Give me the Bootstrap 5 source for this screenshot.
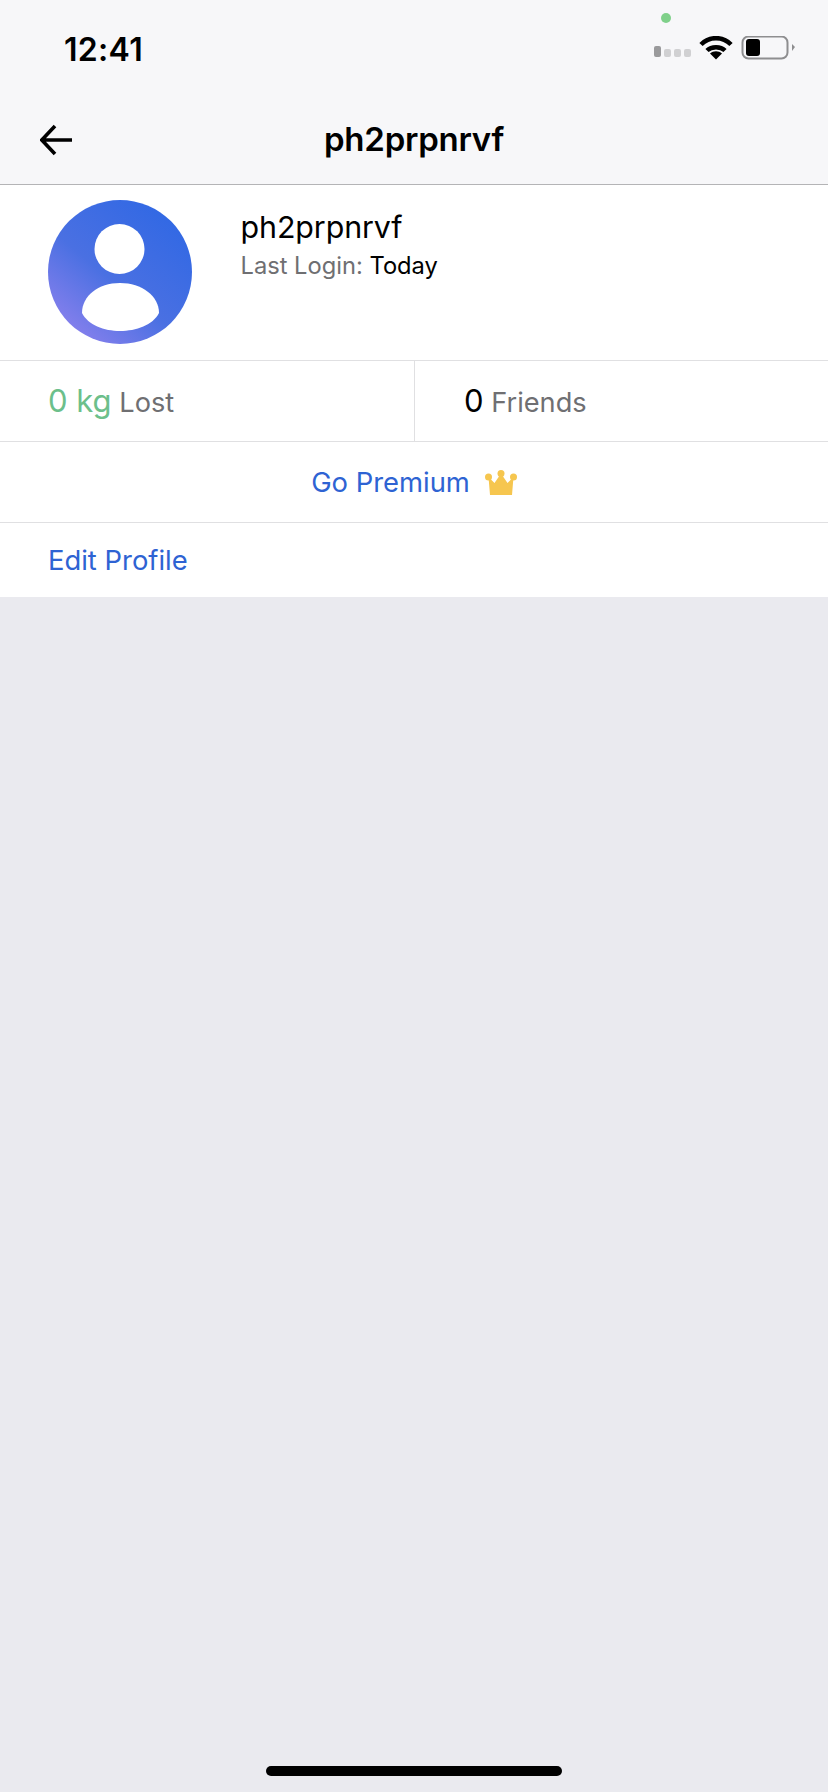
<!DOCTYPE html>
<html lang="en">
<head>
    <meta charset="UTF-8">
    <meta name="viewport" content="width=device-width, initial-scale=1.0">
    <title>Profile</title>
    <link href="https://cdn.jsdelivr.net/npm/bootstrap@5.3.3/dist/css/bootstrap.min.css" rel="stylesheet">
    <style>
        body {
            background: #eaeaef;
            font-family: Inter, "Liberation Sans", sans-serif;
            color: #000;
        }
        .screen { height: 1792px; }
        .top-area { background: #f7f7f9; border-bottom: 1px solid #b4b4b6; height: 185px; }
        .status-row { height: 88px; padding: 12px 33px 0 64px; position: relative; }
        .clock { font-size: 32px; font-weight: 600; letter-spacing: .3px; line-height: 76px; }
        .green-dot { position: absolute; left: 661px; top: 13px; width: 10px; height: 10px; border-radius: 50%; background: #7fd08a; }
        .nav-row { height: 96px; padding: 8px 0 0 40px; position: relative; }
        .back-btn { width: 32px; height: 32px; padding: 0; border: 0; background: none; line-height: 0; }
        .page-title { position: absolute; left: 0; right: 0; top: 32px; text-align: center; font-size: 33px; font-weight: 600; margin: 0; line-height: 38px; letter-spacing: -.25px; }
        .panel { background: #fff; }
        .profile-row { height: 176px; padding: 15px 0 0 48px; border-bottom: 1px solid #e0e0e2; }
        .avatar-pic { width: 144px; height: 144px; flex: none; }
        .profile-text { padding: 8px 0 0 48.500px; }
        .profile-name { font-size: 30.400px; line-height: 38px; letter-spacing: -.1px; }
        .login-line { font-size: 23.700px; line-height: 40px; }
        .muted-grey { color: #6f6f72; }
        .stat-row { height: 81px; border-bottom: 1px solid #e0e0e2; font-size: 27.200px; }
        .stat-cell { width: 50%; padding-left: 48px; line-height: 80px; }
        .stat-cell + .stat-cell { padding-left: 49px; border-left: 1px solid #e0e0e2; }
        .kg-green { color: #6cbf8b; font-size: 31px; }
        .stat-num { font-size: 31px; }
        .premium-row { height: 81px; padding-top: 2px; border-bottom: 1px solid #e0e0e2; font-size: 27.400px; color: #2e63d3; gap: 15px; }
        .edit-row { height: 74px; padding: 2px 0 0 48px; font-size: 27.400px; color: #2e63d3; }
        .home-bar { width: 296px; height: 10px; border-radius: 5px; background: #000; margin: 0 auto 16px; }
    </style>
</head>
<body>
    <div class="screen d-flex flex-column">
        <div class="top-area">
            <div class="status-row d-flex justify-content-between align-items-start">
                <span class="clock">12:41</span>
                <span class="green-dot"></span>
                <svg width="144" height="30" viewBox="0 0 144 30" class="mt-4 flex-none">
                    <rect x="3" y="10" width="7" height="11" rx="2" fill="#9a9a9c"/>
                    <rect x="13" y="13" width="7" height="8" rx="2" fill="#d0d0d2"/>
                    <rect x="23" y="13" width="7" height="8" rx="2" fill="#d0d0d2"/>
                    <rect x="33" y="13" width="7" height="8" rx="2" fill="#d0d0d2"/>
                    <path d="M50 8.500C58 0 72 0 80 8.500M56 14.500C60.500 10 69.500 10 74 14.500" fill="none" stroke="#000" stroke-width="4.500"/>
                    <path d="M59 17.500C62.500 14.500 67.500 14.500 71 17.500L65 23.500Z" fill="#000"/>
                    <rect x="91.500" y=".5" width="45" height="22" rx="6" fill="none" stroke="#8e8e90" stroke-width="2"/>
                    <rect x="95" y="3" width="14" height="17" rx="3" fill="#000"/>
                    <path d="M141 8L144 11L141 15Z" fill="#8e8e90"/>
                </svg>
            </div>
            <div class="nav-row d-flex align-items-center">
                <button class="back-btn" type="button" aria-label="Back">
                    <svg width="32" height="32" viewBox="0 0 32 32"><path d="M15 2L1.800 16L15 30M2 16H32" fill="none" stroke="#000" stroke-width="3.600"/></svg>
                </button>
                <h1 class="page-title">ph2prpnrvf</h1>
            </div>
        </div>

        <div class="panel">
            <div class="profile-row d-flex">
                <svg class="avatar-pic" viewBox="0 0 144 144">
                    <defs>
                        <linearGradient id="avatarFill" x1="0.9" y1="0.1" x2="0.15" y2="1">
                            <stop offset="0" stop-color="#3068e4"/>
                            <stop offset="0.55" stop-color="#4a70e2"/>
                            <stop offset="1" stop-color="#8f82ee"/>
                        </linearGradient>
                    </defs>
                    <circle cx="72" cy="72" r="72" fill="url(#avatarFill)"/>
                    <circle cx="71.500" cy="49" r="25" fill="#fff"/>
                    <path d="M34 113C34 96 50 83 72 83S111 96 111 113C105 125 88 131 72 131S40 125 34 113Z" fill="#fff"/>
                </svg>
                <div class="profile-text">
                    <div class="profile-name">ph2prpnrvf</div>
                    <div class="login-line"><span class="muted-grey">Last Login:</span> Today</div>
                </div>
            </div>
            <div class="stat-row d-flex">
                <div class="stat-cell"><span class="kg-green">0 kg</span> <span class="muted-grey">Lost</span></div>
                <div class="stat-cell"><span class="stat-num">0</span> <span class="muted-grey">Friends</span></div>
            </div>
            <div class="premium-row d-flex align-items-center justify-content-center">
                <span>Go Premium</span>
                <svg width="32" height="26" viewBox="0 0 32 26">
                    <circle cx="3.500" cy="7" r="3.500" fill="#f6c64f"/>
                    <circle cx="16" cy="3.500" r="3.500" fill="#f6c64f"/>
                    <circle cx="28.500" cy="7" r="3.500" fill="#f6c64f"/>
                    <path d="M3.500 7L9.500 13L16 3.500L22.500 13L28.500 7L27 25H5Z" fill="#f6c64f"/>
                </svg>
            </div>
            <div class="edit-row d-flex align-items-center">Edit Profile</div>
        </div>

        <div class="flex-grow-1"></div>
        <div class="home-bar"></div>
    </div>
    <script src="https://cdn.jsdelivr.net/npm/bootstrap@5.3.3/dist/js/bootstrap.bundle.min.js"></script>
</body>
</html>
